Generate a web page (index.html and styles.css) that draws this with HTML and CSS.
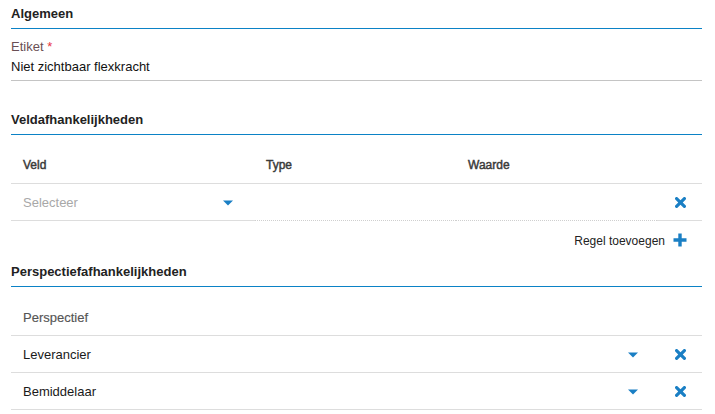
FILE: index.html
```html
<!DOCTYPE html>
<html lang="nl">
<head>
<meta charset="utf-8">
<title>Algemeen</title>
<link rel="stylesheet" href="styles.css">
</head>
<body>
<div class="page">
  <h2 class="section-title">Algemeen</h2>
  <div class="field">
    <div class="field-label">Etiket <span class="req">*</span></div>
    <div class="field-value">Niet zichtbaar flexkracht</div>
  </div>

  <h2 class="section-title section-gap">Veldafhankelijkheden</h2>
  <div class="table">
    <div class="row head">
      <div class="cell c-veld">Veld</div>
      <div class="cell c-type">Type</div>
      <div class="cell c-waarde">Waarde</div>
      <div class="cell c-act"></div>
    </div>
    <div class="row body">
      <div class="cell c-veld select sel-veld"><span class="placeholder">Selecteer</span>
        <svg class="caret" width="10" height="6" viewBox="0 0 10 6"><path d="M0 0.5h10L5 5.5z" fill="#1a7fc4"/></svg>
      </div>
      <div class="cell c-type dotted"></div>
      <div class="cell c-waarde dotted"></div>
      <div class="cell c-act">
        <svg class="x" width="11" height="11" viewBox="0 0 11 11"><path d="M1.6 1.6L9.4 9.4M9.4 1.6L1.6 9.4" stroke="#1a7fc4" stroke-width="3.2" stroke-linecap="round"/></svg>
      </div>
    </div>
  </div>
  <div class="add-row">
    <span class="add-text">Regel toevoegen</span>
    <svg class="plus" width="14" height="14" viewBox="0 0 14 14"><path d="M7 0.5v13M0.5 7h13" stroke="#1a7fc4" stroke-width="3.4"/></svg>
  </div>

  <h2 class="section-title">Perspectiefafhankelijkheden</h2>
  <div class="table">
    <div class="row head">
      <div class="cell c-persp light">Perspectief</div>
      <div class="cell c-act"></div>
    </div>
    <div class="row body">
      <div class="cell c-persp select sel-persp"><span class="val">Leverancier</span>
        <svg class="caret" width="10" height="6" viewBox="0 0 10 6"><path d="M0 0.5h10L5 5.5z" fill="#1a7fc4"/></svg>
      </div>
      <div class="cell c-act">
        <svg class="x" width="11" height="11" viewBox="0 0 11 11"><path d="M1.6 1.6L9.4 9.4M9.4 1.6L1.6 9.4" stroke="#1a7fc4" stroke-width="3.2" stroke-linecap="round"/></svg>
      </div>
    </div>
    <div class="row body">
      <div class="cell c-persp select sel-persp"><span class="val">Bemiddelaar</span>
        <svg class="caret" width="10" height="6" viewBox="0 0 10 6"><path d="M0 0.5h10L5 5.5z" fill="#1a7fc4"/></svg>
      </div>
      <div class="cell c-act">
        <svg class="x" width="11" height="11" viewBox="0 0 11 11"><path d="M1.6 1.6L9.4 9.4M9.4 1.6L1.6 9.4" stroke="#1a7fc4" stroke-width="3.2" stroke-linecap="round"/></svg>
      </div>
    </div>
  </div>
</div>
</body>
</html>
```

FILE: styles.css
```css
html, body {
  margin: 0;
  padding: 0;
  background: #ffffff;
}
body {
  font-family: "Liberation Sans", Arial, sans-serif;
  font-size: 13px;
  color: #111;
}
.page {
  width: 691px;
  margin-left: 11px;
}
.section-title {
  margin: 0;
  font-size: 13px;
  font-weight: bold;
  line-height: 16px;
  padding: 6px 0 6px;
  color: #222;
  border-bottom: 1px solid #0b82c6;
}
.section-gap {
  margin-top: 25px;
}
.field {
  margin-top: 10px;
  padding-bottom: 5px;
  border-bottom: 1px solid #c4c4c4;
}
.field-label {
  line-height: 16px;
  color: #6a4f55;
}
.req {
  color: #e8343e;
}
.field-value {
  line-height: 16px;
  margin-top: 4px;
  color: #111;
}
.table {
  margin-top: 12px;
}
.row {
  display: flex;
  height: 36px;
}
.row.head {
  border-bottom: 1px solid #dddddd;
}
.cell {
  box-sizing: border-box;
  height: 36px;
  display: flex;
  align-items: center;
  padding: 0 12px;
}
.row.head .cell {
  font-size: 12px;
  font-weight: normal;
  color: #3a3a3a;
  -webkit-text-stroke: 0.45px #3a3a3a;
}
.row.head .cell.light {
  font-size: 13px;
  color: #555;
  -webkit-text-stroke: 0.15px #555;
}
.row.body .cell {
  height: 37px;
  border-bottom: 1px solid #dddddd;
}
.row.body {
  height: 37px;
}
.row.body .cell.dotted {
  border-bottom: 1px dotted #cfcfcf;
}
.c-veld { width: 244px; }
.c-type { width: 201px; padding-left: 11px; }
.c-waarde { width: 201px; }
.c-act {
  width: 45px;
  justify-content: center;
  padding: 0;
}
.c-persp { width: 646px; }
.select .caret {
  margin-left: auto;
  margin-top: 2px;
}
.sel-veld { padding-right: 22px; }
.sel-persp { padding-right: 19px; }
.placeholder {
  color: #a8a8a8;
}
.val {
  color: #1a1a1a;
}
.x {
  margin-left: 1px;
}
.add-row {
  height: 37px;
  display: flex;
  align-items: center;
  justify-content: flex-end;
  padding-right: 15px;
  padding-top: 2px;
  box-sizing: border-box;
}
.add-text {
  font-size: 12px;
  color: #222;
  margin-right: 8px;
}
.plus {
  margin-top: -2px;
}
```
